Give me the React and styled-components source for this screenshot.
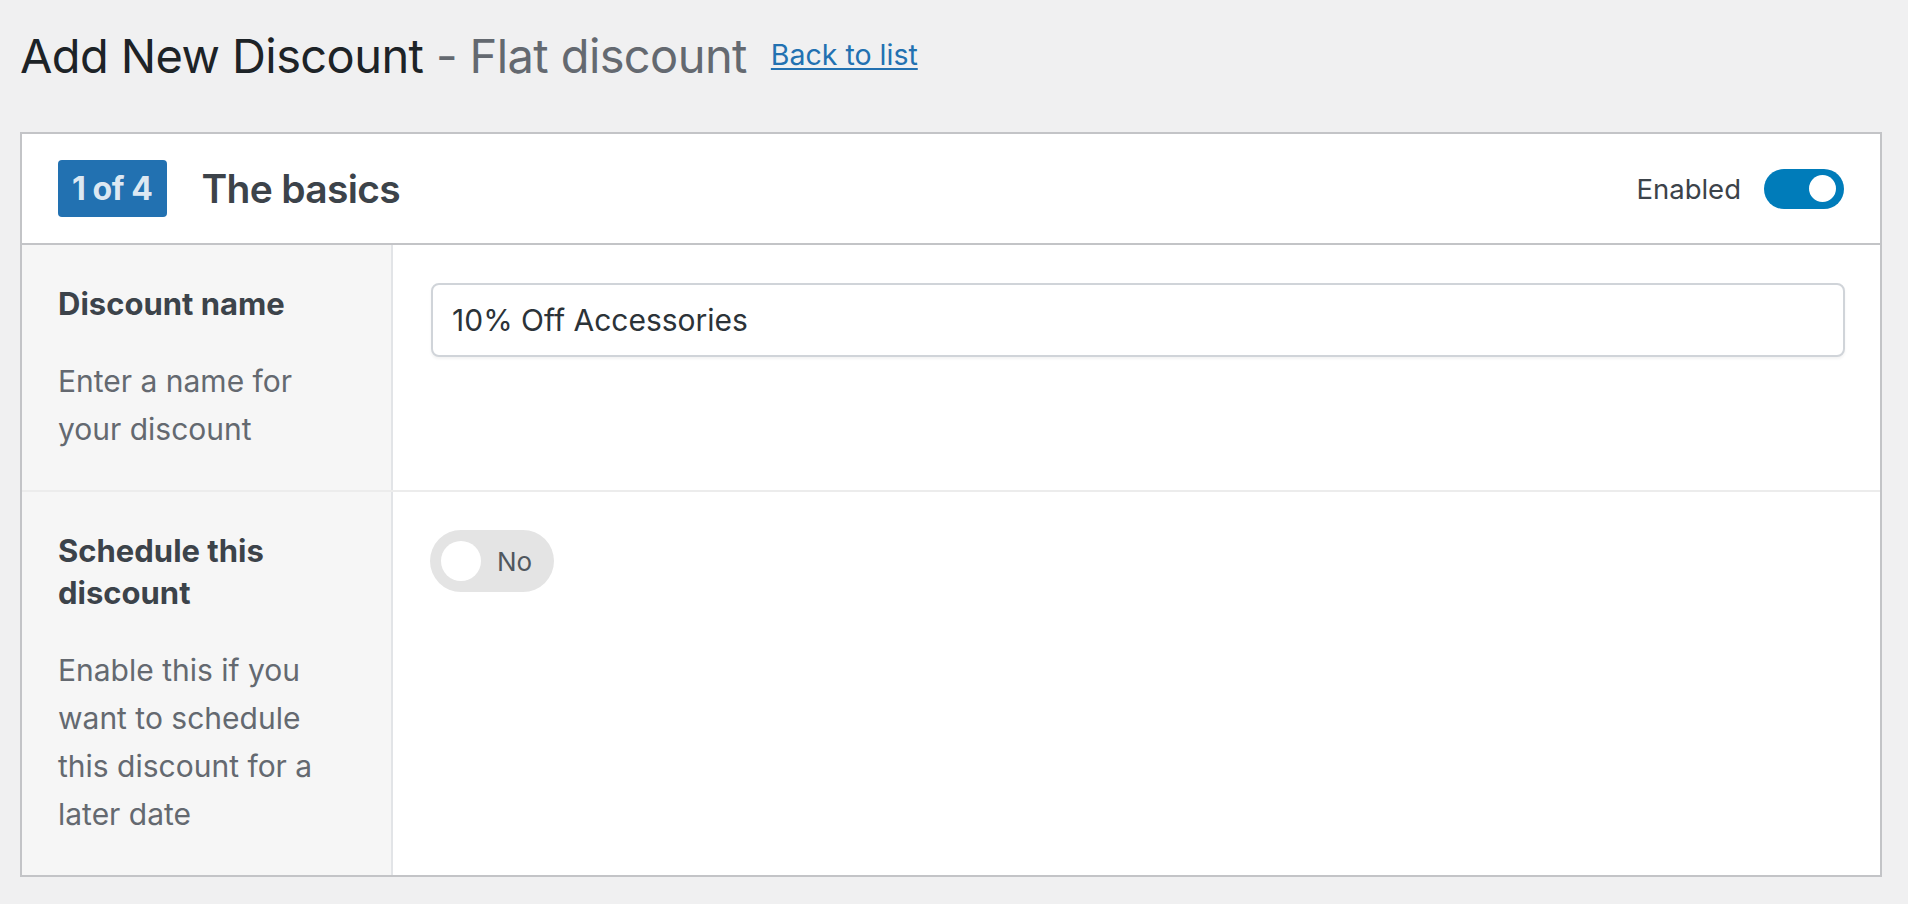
import React, { useState } from 'react';
import styled, { createGlobalStyle } from 'styled-components';

const GlobalStyle = createGlobalStyle`
  body {
    margin: 0;
    background: #f0f0f1;
    font-family: Inter, "Noto Sans", "Liberation Sans", sans-serif;
    color: #3c434a;
  }
`;

const Page = styled.main`
  padding: 24px 26px 0 20px;
`;

const Title = styled.h1`
  margin: 0;
  font-size: 47px;
  line-height: 62px;
  font-weight: 400;
  letter-spacing: -0.6px;
  color: #1d2327;

  .sub {
    color: #646970;
  }
`;

const BackLink = styled.a`
  margin-left: 24px;
  font-size: 28.5px;
  letter-spacing: 0;
  color: #2271b1;
  text-decoration: underline;
  text-underline-offset: 3px;
  vertical-align: 8px;
`;

const Card = styled.section`
  margin-top: 45px;
  background: #fff;
  border: 2px solid #c3c4c7;
`;

const CardHeader = styled.header`
  display: flex;
  align-items: center;
  justify-content: space-between;
  height: 109px;
  padding: 0 36px;
  border-bottom: 2px solid #c3c4c7;
`;

const Step = styled.div`
  display: flex;
  align-items: center;
  gap: 35px;
`;

const Badge = styled.span`
  display: flex;
  align-items: center;
  height: 57px;
  padding: 0 14px;
  border-radius: 4px;
  background: #2271b1;
  color: rgba(255, 255, 255, 0.86);
  font-size: 32px;
  font-weight: 700;
  letter-spacing: -0.4px;
`;

const StepTitle = styled.h2`
  margin: 0;
  font-size: 39px;
  font-weight: 600;
  letter-spacing: -0.7px;
  color: #3c434a;
`;

const Status = styled.div`
  display: flex;
  align-items: center;
  gap: 23px;
  font-size: 27.5px;
  color: #3c434a;
`;

const Switch = styled.button`
  display: flex;
  align-items: center;
  justify-content: ${(p) => (p.$on ? 'flex-end' : 'flex-start')};
  width: 80px;
  height: 40px;
  padding: 0 8px;
  border: 0;
  border-radius: 20px;
  background: ${(p) => (p.$on ? '#007cba' : '#dcdcde')};
  cursor: pointer;

  &::after {
    content: '';
    width: 27px;
    height: 27px;
    border-radius: 50%;
    background: #fff;
  }
`;

const Row = styled.div`
  display: grid;
  grid-template-columns: 371px 1fr;
  & + & {
    border-top: 2px solid #ececec;
  }
`;

const LabelCell = styled.div`
  padding: 38px 52px 37px 36px;
  background: #f6f6f6;
  border-right: 2px solid #e2e4e7;
`;

const Label = styled.label`
  display: block;
  font-size: 31px;
  line-height: 42px;
  font-weight: 700;
  color: #3c434a;
`;

const Hint = styled.p`
  margin: 32px 0 0;
  font-size: 30px;
  line-height: 48px;
  color: #646970;
`;

const FieldCell = styled.div`
  padding: 38px 36px 37px 37px;
`;

const TextInput = styled.input`
  box-sizing: border-box;
  display: block;
  width: 100%;
  height: 74px;
  margin-left: 1px;
  padding: 0 19px;
  border: 2px solid #d0d4d9;
  border-radius: 8px;
  box-shadow: 0 2px 3px rgba(0, 0, 0, 0.05);
  font-family: inherit;
  font-size: 30px;
  color: #2c3338;
  outline: none;
`;

const Pill = styled.button`
  display: flex;
  align-items: center;
  gap: 16px;
  height: 62px;
  padding: 0 22px 0 11px;
  border: 0;
  border-radius: 31px;
  background: #e4e4e4;
  font-family: inherit;
  font-size: 26px;
  color: #50575e;
  cursor: pointer;

  &::before {
    content: '';
    width: 40px;
    height: 40px;
    border-radius: 50%;
    background: #fff;
  }
`;

const App = () => {
  const [enabled, setEnabled] = useState(true);
  const [scheduled, setScheduled] = useState(false);
  const [name, setName] = useState('10% Off Accessories');

  return (
    <>
      <GlobalStyle />
      <Page>
        <Title>
          Add New Discount <span className="sub">- Flat discount</span>
          <BackLink href="#">Back to list</BackLink>
        </Title>

        <Card>
          <CardHeader>
            <Step>
              <Badge>1 of 4</Badge>
              <StepTitle>The basics</StepTitle>
            </Step>
            <Status>
              Enabled
              <Switch
                role="switch"
                aria-checked={enabled}
                $on={enabled}
                onClick={() => setEnabled(!enabled)}
              />
            </Status>
          </CardHeader>

          <Row>
            <LabelCell>
              <Label htmlFor="discount-name">Discount name</Label>
              <Hint>Enter a name for your discount</Hint>
            </LabelCell>
            <FieldCell>
              <TextInput
                id="discount-name"
                value={name}
                onChange={(e) => setName(e.target.value)}
              />
            </FieldCell>
          </Row>

          <Row>
            <LabelCell>
              <Label>Schedule this discount</Label>
              <Hint>Enable this if you want to schedule this discount for a later date</Hint>
            </LabelCell>
            <FieldCell>
              <Pill role="switch" aria-checked={scheduled} onClick={() => setScheduled(!scheduled)}>
                {scheduled ? 'Yes' : 'No'}
              </Pill>
            </FieldCell>
          </Row>
        </Card>
      </Page>
    </>
  );
};

export default App;
